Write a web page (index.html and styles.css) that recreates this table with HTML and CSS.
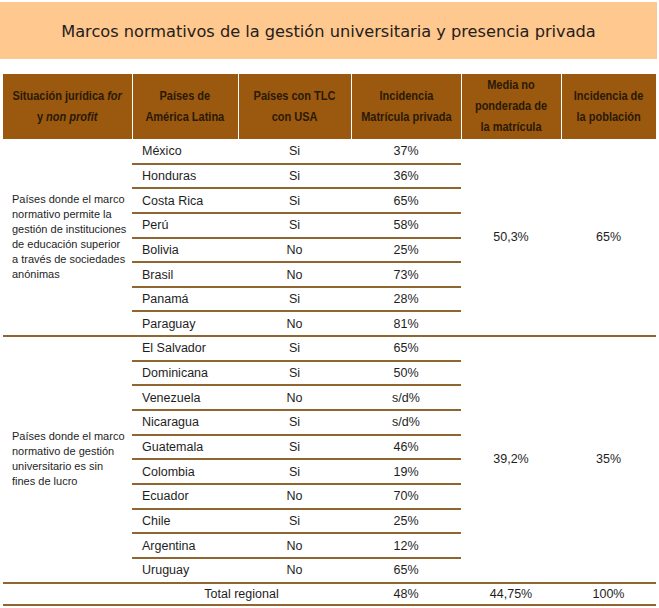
FILE: index.html
```html
<!DOCTYPE html>
<html lang="es">
<head>
<meta charset="utf-8">
<title>Marcos normativos</title>
<link rel="stylesheet" href="styles.css">
</head>
<body>
<div class="page">
  <div class="title">Marcos normativos de la gestión universitaria y presencia privada</div>
  <table class="grid">
    <colgroup>
      <col class="c1"><col class="c2"><col class="c3"><col class="c4"><col class="c5"><col class="c6">
    </colgroup>
    <thead>
      <tr>
        <th><div class="hd"><span>Situación jurídica <i>for</i><br>y <i>non profit</i></span></div></th>
        <th><div class="hd"><span>Países de<br>América Latina</span></div></th>
        <th><div class="hd"><span>Países con TLC<br>con USA</span></div></th>
        <th><div class="hd"><span>Incidencia<br>Matrícula privada</span></div></th>
        <th><div class="hd"><span>Media no<br>ponderada de<br>la matrícula</span></div></th>
        <th><div class="hd"><span>Incidencia de<br>la población</span></div></th>
      </tr>
    </thead>
    <tbody class="g1">
      <tr>
        <td class="desc end" rowspan="8">Países donde el marco normativo permite la gestión de instituciones de educación superior a través de sociedades anónimas</td>
        <td class="pais">México</td><td class="mid">Si</td><td class="mid">37%</td>
        <td class="mid big end" rowspan="8">50,3%</td>
        <td class="mid big end" rowspan="8">65%</td>
      </tr>
      <tr><td class="pais">Honduras</td><td class="mid">Si</td><td class="mid">36%</td></tr>
      <tr><td class="pais">Costa Rica</td><td class="mid">Si</td><td class="mid">65%</td></tr>
      <tr><td class="pais">Perú</td><td class="mid">Si</td><td class="mid">58%</td></tr>
      <tr><td class="pais">Bolivia</td><td class="mid">No</td><td class="mid">25%</td></tr>
      <tr><td class="pais">Brasil</td><td class="mid">No</td><td class="mid">73%</td></tr>
      <tr><td class="pais">Panamá</td><td class="mid">Si</td><td class="mid">28%</td></tr>
      <tr><td class="pais end">Paraguay</td><td class="mid end">No</td><td class="mid end">81%</td></tr>
    </tbody>
    <tbody class="g2">
      <tr>
        <td class="desc end" rowspan="10">Países donde el marco normativo de gestión universitario es sin fines de lucro</td>
        <td class="pais">El Salvador</td><td class="mid">Si</td><td class="mid">65%</td>
        <td class="mid big end" rowspan="10">39,2%</td>
        <td class="mid big end" rowspan="10">35%</td>
      </tr>
      <tr><td class="pais">Dominicana</td><td class="mid">Si</td><td class="mid">50%</td></tr>
      <tr><td class="pais">Venezuela</td><td class="mid">No</td><td class="mid">s/d%</td></tr>
      <tr><td class="pais">Nicaragua</td><td class="mid">Si</td><td class="mid">s/d%</td></tr>
      <tr><td class="pais">Guatemala</td><td class="mid">Si</td><td class="mid">46%</td></tr>
      <tr><td class="pais">Colombia</td><td class="mid">Si</td><td class="mid">19%</td></tr>
      <tr><td class="pais">Ecuador</td><td class="mid">No</td><td class="mid">70%</td></tr>
      <tr><td class="pais">Chile</td><td class="mid">Si</td><td class="mid">25%</td></tr>
      <tr><td class="pais">Argentina</td><td class="mid">No</td><td class="mid">12%</td></tr>
      <tr><td class="pais end">Uruguay</td><td class="mid end">No</td><td class="mid end">65%</td></tr>
    </tbody>
    <tbody class="tot">
      <tr>
        <td class="end"></td>
        <td class="mid end" colspan="2">Total regional</td>
        <td class="mid end">48%</td>
        <td class="mid end">44,75%</td>
        <td class="mid end">100%</td>
      </tr>
    </tbody>
  </table>
</div>
</body>
</html>
```

FILE: styles.css
```css
html, body {
  margin: 0;
  padding: 0;
  background: #ffffff;
}

.page {
  width: 659px;
  padding-top: 2px;
}

.title {
  width: 657px;
  height: 57px;
  background: #fec88e;
  color: #24201c;
  font-family: "DejaVu Sans", sans-serif;
  font-size: 16.2px;
  display: flex;
  align-items: center;
  justify-content: center;
  padding-top: 1px;
  box-sizing: border-box;
}

.grid {
  margin: 15px 0 0 3px;
  width: 653px;
  border-collapse: collapse;
  table-layout: fixed;
  font-family: "Liberation Sans", Arial, sans-serif;
  color: #1e1e1e;
}

.c1 { width: 129px; }
.c2 { width: 106px; }
.c3 { width: 113px; }
.c4 { width: 110px; }
.c5 { width: 100px; }
.c6 { width: 95px; }

.grid th {
  background: #9b580f;
  color: #2a1a06;
  font-size: 12.5px;
  font-weight: bold;
  line-height: 21px;
  height: 65px;
  padding: 0;
  vertical-align: middle;
  border-left: 1px solid #ffffff;
  overflow: hidden;
}

.grid th:first-child {
  border-left: none;
}

.hd {
  display: flex;
  justify-content: center;
}

.hd span {
  display: block;
  white-space: nowrap;
  text-align: center;
  transform: scaleX(0.88);
}

.grid tbody tr {
  height: 24.65px;
}

.grid td {
  padding: 0;
  font-size: 12.5px;
  vertical-align: middle;
}

.grid td.pais,
.grid td.mid:not(.big) {
  border-bottom: 2px solid #8f6530;
}

.grid td.pais {
  padding-left: 10px;
  text-align: left;
}

.grid td.mid {
  text-align: center;
}

.grid td.desc {
  font-size: 11px;
  line-height: 15px;
  padding: 0 4px 0 9px;
  text-align: left;
}

.grid td.end {
  border-bottom: 2px solid #8f6530;
}

.grid .tot tr {
  height: 22px;
}

.grid .tot td {
  border-top: 2px solid #8f6530;
}
```
